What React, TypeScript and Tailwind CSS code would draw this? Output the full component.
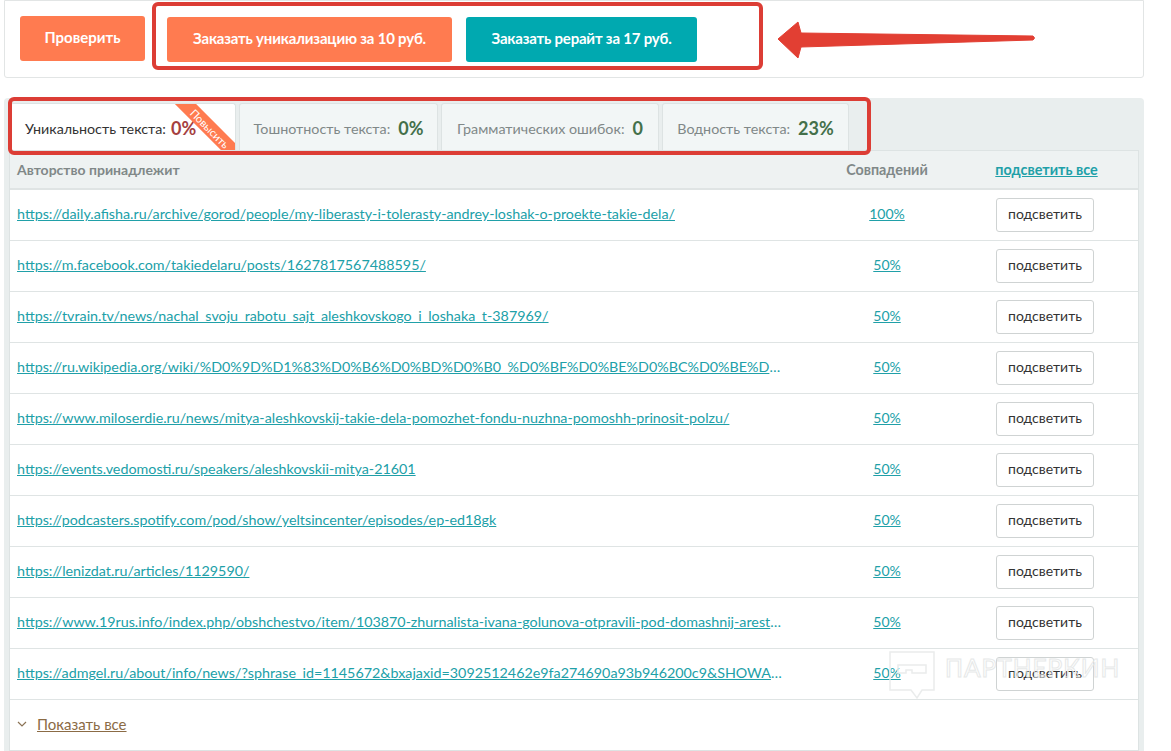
const FONT = "font-['Lato','Open_Sans',sans-serif]"

const rows = [
  { url: 'https://daily.afisha.ru/archive/gorod/people/my-liberasty-i-tolerasty-andrey-loshak-o-proekte-takie-dela/', pct: '100%' },
  { url: 'https://m.facebook.com/takiedelaru/posts/1627817567488595/', pct: '50%' },
  { url: 'https://tvrain.tv/news/nachal_svoju_rabotu_sajt_aleshkovskogo_i_loshaka_t-387969/', pct: '50%' },
  { url: 'https://ru.wikipedia.org/wiki/%D0%9D%D1%83%D0%B6%D0%BD%D0%B0_%D0%BF%D0%BE%D0%BC%D0%BE%D1%89%D1%8C', pct: '50%' },
  { url: 'https://www.miloserdie.ru/news/mitya-aleshkovskij-takie-dela-pomozhet-fondu-nuzhna-pomoshh-prinosit-polzu/', pct: '50%' },
  { url: 'https://events.vedomosti.ru/speakers/aleshkovskii-mitya-21601', pct: '50%' },
  { url: 'https://podcasters.spotify.com/pod/show/yeltsincenter/episodes/ep-ed18gk', pct: '50%' },
  { url: 'https://lenizdat.ru/articles/1129590/', pct: '50%' },
  { url: 'https://www.19rus.info/index.php/obshchestvo/item/103870-zhurnalista-ivana-golunova-otpravili-pod-domashnij-arest-i-otpustili', pct: '50%' },
  { url: 'https://admgel.ru/about/info/news/?sphrase_id=1145672&bxajaxid=3092512462e9fa274690a93b946200c9&SHOWALL_1=1', pct: '50%' },
]

function Tab({ label, value, width }: { label: string; value: string; width: string }) {
  return (
    <div className={`${width} h-[47px] flex items-center justify-center pt-[3px] mr-[3px] bg-[#f2f6f6] border border-b-0 border-[#dde3e3] rounded-t-[3px]`}>
      <span className="text-[14.3px] text-[#808888]">{label}</span>
      <span className="ml-2 text-[18px] font-bold text-[#44704a]">{value}</span>
    </div>
  )
}

function Row({ url, pct }: { url: string; pct: string }) {
  return (
    <div className="h-[51px] flex items-center border-b border-[#dfe4e4] bg-white">
      <div className="w-[765px] ml-[7px] pb-[2px] truncate text-[14.3px] text-[#20a0a8]">
        <a className="underline">{url}</a>
      </div>
      <div className="w-[213px] pb-[4px] pr-[3px] text-center">
        <a className="text-[14px] text-[#20a0a8] underline">{pct}</a>
      </div>
      <button className="w-[98px] h-[34px] ml-px pb-[3px] bg-white border border-[#cfd3d3] rounded-[3px] text-[14px] text-[#333]">
        подсветить
      </button>
    </div>
  )
}

export default function App() {
  return (
    <div className={`relative w-[1171px] h-[751px] overflow-hidden bg-white ${FONT}`}>
      {/* top panel */}
      <div className="ml-1 w-[1140px] h-[78px] border border-[#e2e5e5] rounded-b-[3px] flex pl-[15px] pt-[15px] gap-[22px]">
        <button className="w-[125px] h-[45px] pb-[2px] bg-[#ff7b50] rounded-[3px] text-white text-[15px] font-bold">Проверить</button>
        <div className="flex gap-[14px] pt-px">
          <button className="w-[285px] h-[45px] pb-[2px] bg-[#ff7b50] rounded-[3px] text-white text-[15px] tracking-[-0.2px] font-bold">Заказать уникализацию за 10 руб.</button>
          <button className="w-[231px] h-[45px] pb-[2px] bg-[#00a9b0] rounded-[3px] text-white text-[15px] tracking-[-0.2px] font-bold">Заказать рерайт за 17 руб.</button>
        </div>
      </div>

      {/* results panel */}
      <div className="ml-1 mt-5 w-[1140px] h-[660px] bg-[#e9eeee] rounded-t-[4px] pt-[5px] pl-[5px]">
        <div className="flex h-[47px] pl-px">
          <div className="relative w-[226px] h-[47px] flex items-center pt-[3px] pl-[14px] mr-[3px] bg-white border border-b-0 border-[#dde3e3] rounded-t-[3px] overflow-hidden">
            <span className="text-[14.3px] text-[#333]">Уникальность текста:</span>
            <span className="ml-[5px] text-[18px] font-bold text-[#a5403f]">0%</span>
            <div className="absolute right-[-33px] top-[17px] w-[116px] h-[15px] rotate-45 bg-[#ff7b50] text-white text-[11px] leading-[15px] text-center">
              Повысить
            </div>
          </div>
          <Tab label="Тошнотность текста:" value="0%" width="w-[199px]" />
          <Tab label="Грамматических ошибок:" value="0" width="w-[218px]" />
          <Tab label="Водность текста:" value="23%" width="w-[187px]" />
        </div>

        <div className="w-[1130px] border border-[#dde3e3] bg-white">
          <div className="h-[39px] flex items-center bg-[#eef2f2] border-b-2 border-[#dfe4e4] text-[14px] font-bold text-[#808888]">
            <span className="w-[765px] ml-[7px]">Авторство принадлежит</span>
            <span className="w-[213px] pr-[3px] text-center text-[14.3px]">Совпадений</span>
            <a className="w-[103px] text-center whitespace-nowrap text-[14.4px] text-[#20a0a8] underline">подсветить все</a>
          </div>
          {rows.map((r) => (
            <Row key={r.url} url={r.url} pct={r.pct} />
          ))}
          <div className="h-[50px] flex items-center pl-[7px] pb-[2px] bg-white">
            <svg width="10" height="6" viewBox="0 0 10 6" fill="none" stroke="#8b7355" strokeWidth="1.2">
              <path d="M1 1l4 4 4-4" />
            </svg>
            <a className="ml-[10px] text-[15px] text-[#8b6b45] underline">Показать все</a>
          </div>
        </div>
      </div>

      {/* screenshot annotations */}
      <div className="absolute left-[152px] top-[2px] w-[611px] h-[68px] border-[4px] border-[#dc3d35] rounded-[6px]" />
      <div className="absolute left-[8px] top-[97px] w-[863px] h-[58px] border-[4px] border-[#dc3d35] rounded-[6px]" />
      <svg className="absolute left-[776px] top-[20px]" width="264" height="40" viewBox="0 0 264 40">
        <path d="M2 19L22 2l3 11 232 3q3 2 0 4L25 27l-3 11z" fill="#e23f33" stroke="#e23f33" strokeLinejoin="round" />
      </svg>

      {/* watermark */}
      <svg className="absolute left-[888px] top-[650px]" width="48" height="50" viewBox="0 0 48 50" fill="none" stroke="#eaecec" strokeWidth="1.5">
        <path d="M2 2h44v38H34l-5 8-6-8H2z" />
        <path d="M10 15h28v8H24v-3h-6v3h-8z" />
      </svg>
      <div className="absolute left-[945px] top-[652px] text-[24.5px] leading-[32px] tracking-[1px] text-transparent [-webkit-text-stroke:1px_#e6e8e8]">
        ПАРТНЕРКИН
      </div>
    </div>
  )
}
